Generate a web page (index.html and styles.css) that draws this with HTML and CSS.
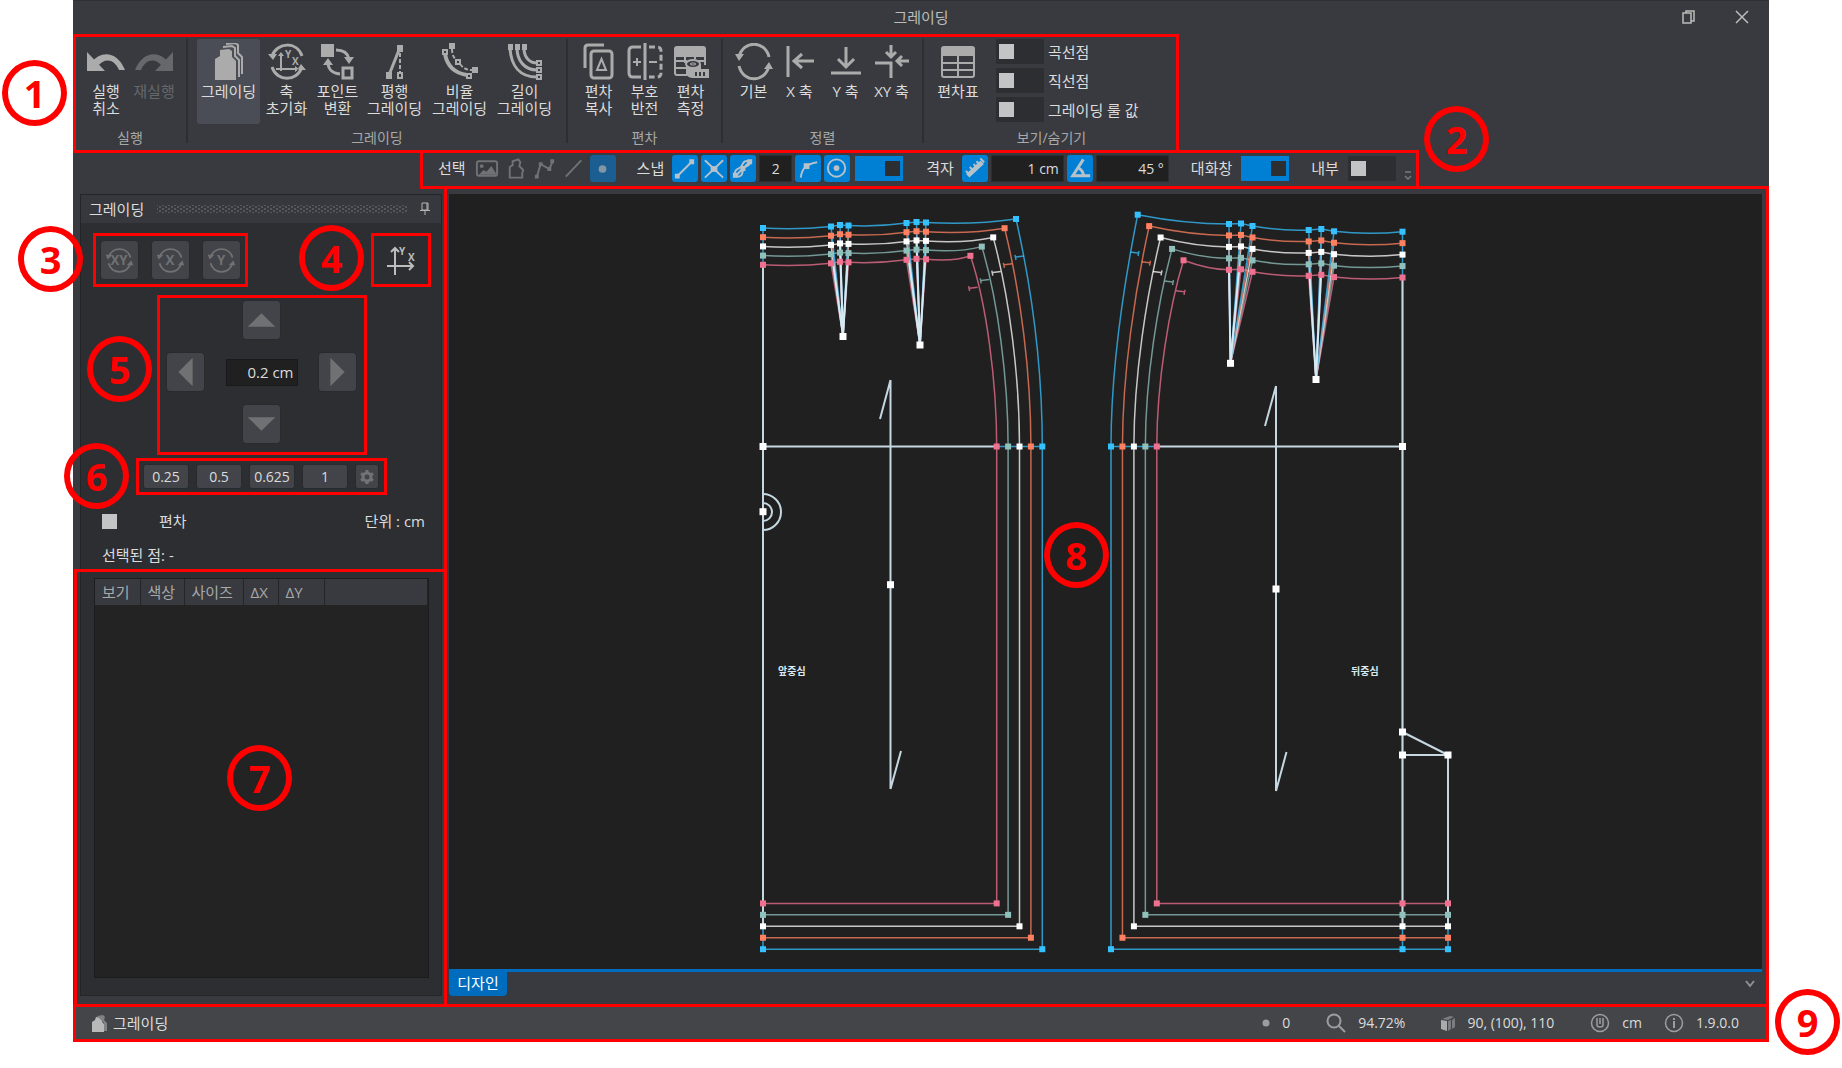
FILE: index.html
```html
<!DOCTYPE html>
<html lang="ko">
<head>
<meta charset="UTF-8">
<meta name="viewport" content="width=device-width, initial-scale=1.0">
<title>그레이딩</title>
<link rel="stylesheet" href="styles.css">
</head>
<body>
<div class="app">

    <header class="titlebar">
        <h1>그레이딩</h1>
        <div class="window-buttons">
            <button type="button" aria-label="이전 크기로"><svg width="14" height="16" viewBox="0 0 14 16"><path d="M1 4h8v10H1zM4 4V2h8v10H9" fill="none" stroke="currentColor" stroke-width="1.5"/></svg></button>
            <button type="button" aria-label="닫기"><svg width="14" height="16" viewBox="0 0 14 16"><path d="M1 2l12 12M13 2L1 14" fill="none" stroke="currentColor" stroke-width="1.5"/></svg></button>
        </div>
    </header>

    <section class="ribbon">
        <div class="group group-run">
            <div class="tools">
                <button type="button" class="tool w48"><svg viewBox="0 0 38 38"><path d="M0 9v19h18z" fill="currentColor"/><path d="M5 19C13 8 30 7 38 27h-6C27 15 17 15 11 23z" fill="currentColor"/></svg><span>실행<br>취소</span></button>
                <button type="button" class="tool w48" disabled><svg viewBox="0 0 38 38"><path d="M38 9v19H20z" fill="currentColor"/><path d="M33 19C25 8 8 7 0 27h6C11 15 21 15 27 23z" fill="currentColor"/></svg><span>재실행</span></button>
            </div>
            <p>실행</p>
        </div>
        <div class="group group-grading">
            <div class="tools">
                <button type="button" class="tool w63 selected"><svg viewBox="0 0 38 38"><path d="M5 37V16l5-3V7l9-1 3 2v6l4 4v19z" fill="currentColor"/><path d="M13 4l9-1 3 2v8l4 4v17M16 1l9-1 3 2v8l4 4v17" fill="none" stroke="currentColor" stroke-width="2"/></svg><span>그레이딩</span></button>
                <button type="button" class="tool w53"><svg viewBox="0 0 38 38"><g fill="none" stroke="currentColor" stroke-width="3"><path d="M4 13C9-1 29-2 34 13M34 24C29 39 9 39 4 24"/><path d="M13 11v17M8 26h20" stroke-width="2"/></g><path d="M0 11h9l-4 6zM38 27h-9l4-6zM10 13h6l-3-4zM27 23v6l4-3z" fill="currentColor"/><text x="17" y="15" class="glyph">Y</text><text x="24" y="22" class="glyph">X</text></svg><span>축<br>초기화</span></button>
                <button type="button" class="tool w49"><svg viewBox="0 0 38 38"><path d="M2 1h13v13H2zM25 14h10l-5 7zM4 22h10L9 15z" fill="currentColor"/><path d="M17 7c9 0 12 4 13 9M9 19c0 8 4 11 12 12M24 25h9v10h-9z" fill="none" stroke="currentColor" stroke-width="3"/></svg><span>포인트<br>변환</span></button>
                <button type="button" class="tool w65"><svg viewBox="0 0 38 38"><path d="M21 2h6v7h-6zM10 29h6v7h-6z" fill="currentColor"/><path d="M23 7L13 32" stroke="currentColor" stroke-width="3"/><path d="M24 10v19" stroke="currentColor" stroke-width="2" stroke-dasharray="4 2"/><path d="M22 30h4v5h-4z" fill="none" stroke="currentColor" stroke-width="2"/></svg><span>평행<br>그레이딩</span></button>
                <button type="button" class="tool w65"><svg viewBox="0 0 38 38"><path d="M8 0h6v6H8zM31 24h6v6h-6z" fill="currentColor"/><g fill="none" stroke="currentColor" stroke-width="2"><path d="M2 7h4v4H2zM26 31h4v4h-4zM15 17h4v4h-4z"/><path d="M11 6c0 6 2 9 5 12M19 21c3 4 6 6 12 6" stroke-width="2" stroke-dasharray="4 2"/><path d="M4 11c2 11 9 19 22 21" stroke-width="4"/></g></svg><span>비율<br>그레이딩</span></button>
                <button type="button" class="tool w65"><svg viewBox="0 0 38 38"><path d="M2 1h5v6H2zM9 1h5v6H9zM16 1h5v6h-5z" fill="currentColor"/><g fill="none" stroke="currentColor"><path d="M4 5c1 18 10 29 27 29M11 5c0 13 8 22 20 22M18 5c0 10 6 15 13 15" stroke-width="3"/><path d="M31 18h4v4h-4zM31 25h4v4h-4zM31 32h4v4h-4z" stroke-width="2"/></g></svg><span>길이<br>그레이딩</span></button>
            </div>
            <p>그레이딩</p>
        </div>
        <div class="group group-delta">
            <div class="tools">
                <button type="button" class="tool w46"><svg viewBox="0 0 38 38"><g fill="none" stroke="currentColor" stroke-width="3"><path d="M5 25V5q0-3 3-3h16"/><rect x="11" y="8" width="21" height="27" rx="3"/><path d="M17 27l4.500-11L26 27z" stroke-width="2"/></g></svg><span>편차<br>복사</span></button>
                <button type="button" class="tool w46"><svg viewBox="0 0 38 38"><g fill="none" stroke="currentColor" stroke-width="3"><path d="M19 0v37M15 4H7Q3 4 3 8v22q0 4 4 4h8"/><path d="M23 4h8q4 0 4 4v22q0 4-4 4h-8" stroke-dasharray="6 3"/><path d="M7 19h8M11 15v8M23 19h8" stroke-width="2"/></g></svg><span>부호<br>반전</span></button>
                <button type="button" class="tool w46"><svg viewBox="0 0 38 38"><path d="M2 6q0-3 3-3h26q3 0 3 3v8H2z" fill="currentColor"/><path d="M3 12v18q0 2 2 2h10M3 18h12M3 25h12M13 12v8M23 12v4M33 12v10M24 18h9" fill="none" stroke="currentColor" stroke-width="2"/><path d="M14 21v10q2 4 7 4h16v-9h-8v-5" fill="currentColor"/><ellipse cx="21" cy="21" rx="7" ry="4" fill="#383a3f" stroke="currentColor" stroke-width="2"/><ellipse cx="21" cy="21" rx="3" ry="1" fill="none" stroke="currentColor"/><path d="M24 33v-4M28 33v-4M32 33v-4" fill="none" stroke="#383a3f" stroke-width="2"/></svg><span>편차<br>측정</span></button>
            </div>
            <p>편차</p>
        </div>
        <div class="group group-align">
            <div class="tools">
                <button type="button" class="tool w46"><svg viewBox="0 0 38 38"><path d="M4 14C8-3 30-3 34 14M34 23C30 40 8 40 4 23" fill="none" stroke="currentColor" stroke-width="3"/><path d="M0 11h9l-5 7zM38 26h-9l5-7z" fill="currentColor"/></svg><span>기본</span></button>
                <button type="button" class="tool w46"><svg viewBox="0 0 38 38"><path d="M7 3v31M33 18H13M21 11l-8 7 8 7" fill="none" stroke="currentColor" stroke-width="3"/></svg><span>X 축</span></button>
                <button type="button" class="tool w46"><svg viewBox="0 0 38 38"><path d="M4 30h30M19 4v20M11 16l8 8 8-8" fill="none" stroke="currentColor" stroke-width="3"/></svg><span>Y 축</span></button>
                <button type="button" class="tool w46"><svg viewBox="0 0 38 38"><path d="M18 2v11M13 9l5 5 5-5M2 20h16v15M36 18H24M29 13l-5 5 5 5" fill="none" stroke="currentColor" stroke-width="3"/></svg><span>XY 축</span></button>
            </div>
            <p>정렬</p>
        </div>
        <div class="group group-view">
            <div class="tools">
                <button type="button" class="tool w54"><svg viewBox="0 0 38 38"><path d="M2 6q0-3 3-3h28q3 0 3 3v7H2z" fill="currentColor"/><path d="M3 12v20q0 2 2 2h28q2 0 2-2V12M3 20h32M3 27h32M19 12v22" fill="none" stroke="currentColor" stroke-width="2"/></svg><span>편차표</span></button>
                <div class="toggles">
                    <label><input type="checkbox" class="toggle">곡선점</label>
                    <label><input type="checkbox" class="toggle">직선점</label>
                    <label><input type="checkbox" class="toggle">그레이딩 룰 값</label>
                </div>
            </div>
            <p>보기/숨기기</p>
        </div>
        <span class="frame"></span>
        <span class="pin pin-1">1</span>
    </section>

    <section class="quickbar">
        <span class="q-label">선택</span>
        <button type="button" class="q-btn flat" aria-label="이미지"><svg viewBox="0 0 27 27"><rect x="3" y="6" width="21" height="15" rx="2" fill="none" stroke="currentColor" stroke-width="2"/><circle cx="8" cy="11" r="2" fill="currentColor"/><path d="M5 20l5-5 3 2 5-6 5 8v1z" fill="currentColor"/></svg></button>
        <button type="button" class="q-btn flat" aria-label="패턴"><svg viewBox="0 0 27 27"><path d="M7 23V12l3-2V6l6-2 2 3-1 4 4 4-1 3v5z" fill="none" stroke="currentColor" stroke-width="2"/></svg></button>
        <button type="button" class="q-btn flat" aria-label="폴리선"><svg viewBox="0 0 27 27"><path d="M5 22L9 9l9 5 4-9" fill="none" stroke="currentColor" stroke-width="2"/><path d="M3 20h4v4H3zM7 7h4v4H7zM16 12h4v4h-4zM19 4h4v4h-4z" fill="currentColor"/></svg></button>
        <button type="button" class="q-btn flat" aria-label="선"><svg viewBox="0 0 27 27"><path d="M5 22L21 5" stroke="currentColor" stroke-width="2"/></svg></button>
        <button type="button" class="q-btn dim" aria-label="점"><svg viewBox="0 0 27 27"><circle cx="13" cy="14" r="4" fill="currentColor"/></svg></button>

        <span class="q-label snap">스냅</span>
        <button type="button" class="q-btn" aria-label="끝점"><svg viewBox="0 0 27 27"><path d="M6 21L21 6" stroke="currentColor" stroke-width="2"/><path d="M3 19h5v5H3zM18 4h5v5h-5z" fill="currentColor"/></svg></button>
        <button type="button" class="q-btn" aria-label="교차점"><svg viewBox="0 0 27 27"><path d="M4 5l19 18M23 5L4 23" stroke="currentColor" stroke-width="2"/><path d="M10 11h7v6h-7z" fill="currentColor"/></svg></button>
        <button type="button" class="q-btn" aria-label="분할점"><svg viewBox="0 0 27 27"><path d="M6 21L21 6M5 19c0-7 5-4 7-8s2-6 9-5M7 22c7 0 5-4 7-8s7-2 7-8" fill="none" stroke="currentColor" stroke-width="2"/><path d="M3 18h5v5H3zM18 4h5v5h-5zM11 11h5v5h-5z" fill="currentColor"/></svg></button>
        <input type="text" class="q-input tiny" value="2" aria-label="분할 수">
        <button type="button" class="q-btn" aria-label="접점"><svg viewBox="0 0 27 27"><path d="M6 23c1-9 5-14 17-16" fill="none" stroke="currentColor" stroke-width="2"/><path d="M9 8h6v6H9z" fill="currentColor"/></svg></button>
        <button type="button" class="q-btn" aria-label="중심점"><svg viewBox="0 0 27 27"><circle cx="13" cy="13" r="9" fill="none" stroke="currentColor" stroke-width="2"/><circle cx="13" cy="13" r="3" fill="currentColor"/></svg></button>
        <input type="checkbox" class="toggle wide-gap" checked aria-label="스냅">

        <span class="q-label grid">격자</span>
        <button type="button" class="q-btn" aria-label="격자 간격"><svg viewBox="0 0 27 27"><path d="M6 21L21 7" stroke="currentColor" stroke-width="5"/><path d="M4 16l4 4M8 12l4 4M12 9l4 4M15 6l4 4M19 3l4 4" stroke="currentColor" stroke-width="2"/></svg></button>
        <input type="text" class="q-input" value="1 cm" aria-label="격자 간격 값">
        <button type="button" class="q-btn" aria-label="각도"><svg viewBox="0 0 27 27"><path d="M17 4L6 21h18M12 13q5 3 5 8" fill="none" stroke="currentColor" stroke-width="3"/></svg></button>
        <input type="text" class="q-input" value="45 °" aria-label="각도 값">

        <label class="q-label dialog">대화창 <input type="checkbox" class="toggle" checked></label>
        <label class="q-label inner">내부 <input type="checkbox" class="toggle"></label>
        <button type="button" class="q-more" aria-label="더 보기"><svg width="8" height="10" viewBox="0 0 8 10"><path d="M1 1h6M1 5l3 3 3-3" fill="none" stroke="currentColor" stroke-width="1.500"/></svg></button>
        <span class="frame"></span>
        <span class="pin pin-2">2</span>
    </section>

    <main class="main">
        <aside class="side">
            <div class="panel">
                <div class="panel-head">
                    <h2>그레이딩</h2>
                    <span class="grip"></span>
                    <button type="button" aria-label="고정"><svg width="10" height="14" viewBox="0 0 10 14"><path d="M2 1h6v7H2zM0 8.500h10M5 9v4M7 1v7" fill="none" stroke="currentColor" stroke-width="1"/></svg></button>
                </div>
                <div class="panel-body">
                    <div class="row-axis">
                        <div class="boxed rotate">
                            <button type="button" class="key" disabled aria-label="XY 회전"><svg viewBox="0 0 39 39"><use href="#spin"/><text x="19" y="25" class="axis">XY</text></svg></button>
                            <button type="button" class="key" disabled aria-label="X 회전"><svg viewBox="0 0 39 39"><use href="#spin"/><text x="19" y="25" class="axis">X</text></svg></button>
                            <button type="button" class="key" disabled aria-label="Y 회전"><svg viewBox="0 0 39 39"><use href="#spin"/><text x="19" y="25" class="axis">Y</text></svg></button>
                        </div>
                        <button type="button" class="boxed origin" aria-label="축 설정"><svg width="34" height="34" viewBox="0 0 34 34"><path d="M11 6v26M3 23h26M7 9l4-4 4 4M25 19l4 4-4 4" fill="none" stroke="currentColor" stroke-width="2"/><text x="15" y="12" class="glyph">Y</text><text x="24" y="18" class="glyph">X</text></svg></button>
                    </div>

                    <div class="boxed pad">
                        <button type="button" class="key up" disabled aria-label="위"><svg viewBox="0 0 39 40"><path d="M5 27l14.500-14L34 27z" fill="currentColor"/></svg></button>
                        <button type="button" class="key left" disabled aria-label="왼쪽"><svg viewBox="0 0 39 40"><path d="M27 5v30L12 20z" fill="currentColor"/></svg></button>
                        <input type="text" class="step" value="0.2 cm" aria-label="이동량">
                        <button type="button" class="key right" disabled aria-label="오른쪽"><svg viewBox="0 0 39 40"><path d="M12 5v30l15-15z" fill="currentColor"/></svg></button>
                        <button type="button" class="key down" disabled aria-label="아래"><svg viewBox="0 0 39 40"><path d="M5 13l14.500 14L34 13z" fill="currentColor"/></svg></button>
                    </div>

                    <div class="boxed presets">
                        <button type="button">0.25</button>
                        <button type="button">0.5</button>
                        <button type="button">0.625</button>
                        <button type="button">1</button>
                        <button type="button" class="gear" disabled aria-label="설정"><svg width="16" height="16" viewBox="0 0 16 16"><circle cx="8" cy="8" r="4" fill="none" stroke="currentColor" stroke-width="3"/><path d="M8 1v3M8 12v3M2 4.500l2.500 1.500M11.500 10l2.500 1.500M2 11.500L4.500 10M11.500 6L14 4.500" stroke="currentColor" stroke-width="3"/></svg></button>
                    </div>

                    <div class="row-delta">
                        <label><input type="checkbox">편차</label>
                        <span>단위 : cm</span>
                    </div>
                    <p class="picked">선택된 점: -</p>

                    <div class="sizes">
                        <table>
                            <thead>
                                <tr><th class="c1">보기</th><th class="c2">색상</th><th class="c3">사이즈</th><th class="c4">ΔX</th><th class="c5">ΔY</th><th></th></tr>
                            </thead>
                        </table>
                    </div>
                </div>
            </div>
            <span class="frame"></span>
            <span class="pin pin-3">3</span>
            <span class="pin pin-4">4</span>
            <span class="pin pin-5">5</span>
            <span class="pin pin-6">6</span>
            <span class="pin pin-7">7</span>
        </aside>

        <section class="workspace">
            <div class="canvas">
                <svg viewBox="449 194 1313 775" role="img" aria-label="패턴">
                    <g id="graded"></g>
                    <g class="base">
                        <path d="M763 265V926M763 446.500H997M890.500 380V789M890.500 380L880 419M890.500 789L901 751"/>
                        <path d="M763 494a18 18 0 0 1 0 36M763 503a9 9 0 0 1 0 18"/>
                        <path d="M1402.500 277V926M1157 446.500h245.500M1276 386v405M1276 386l-11 40M1276 791l10.500-39"/>
                        <path d="M1402.500 732L1448 755H1402.500M1448 755v171"/>
                    </g>
                    <g id="knots"></g>
                    <text x="778" y="675" class="note">앞중심</text>
                    <text x="1351" y="675" class="note">뒤중심</text>
                </svg>
            </div>
            <div class="tabs">
                <button type="button" class="tab">디자인</button>
                <button type="button" class="tabs-more" aria-label="탭 목록"><svg width="10" height="8" viewBox="0 0 10 8"><path d="M1 1l4 5 4-5" fill="none" stroke="currentColor" stroke-width="2"/></svg></button>
            </div>
            <span class="frame"></span>
            <span class="pin pin-8">8</span>
        </section>
    </main>

    <footer class="statusbar">
        <svg class="mode-icon" width="16" height="19" viewBox="0 0 16 19"><path d="M0 18V8l3-2 1-3 6 1v4l2 2v8z" fill="currentColor"/><path d="M5 2l6-1 2 2-1 3 3 3v8h-3V9" fill="#818285"/></svg>
        <span class="mode">그레이딩</span>
        <span class="stat s-count"><svg width="8" height="20" viewBox="0 0 8 20"><circle cx="4" cy="10" r="3.500" fill="currentColor"/></svg>0</span>
        <span class="stat s-zoom"><svg width="20" height="20" viewBox="0 0 20 20"><circle cx="8" cy="8" r="6.500" fill="none" stroke="currentColor" stroke-width="2"/><path d="M13 13l6 6" stroke="currentColor" stroke-width="2"/></svg>94.72%</span>
        <span class="stat s-size"><svg width="14" height="16" viewBox="0 0 14 16"><path d="M0 5l6 1v10l-6-2z" fill="#ababab"/><path d="M7 6l3-1v9l-3 2zM11 5l3-2v9l-3 2zM1 4l8-3 4 1-6 3z" fill="#7b7c7f"/></svg>90, (100), 110</span>
        <span class="stat s-unit"><svg width="20" height="20" viewBox="0 0 20 20"><circle cx="10" cy="10" r="8.500" fill="none" stroke="currentColor" stroke-width="1.500"/><path d="M7 5v7q0 2 3 2t3-2V5M10 5v6" fill="none" stroke="currentColor" stroke-width="1.500"/></svg>cm</span>
        <span class="stat s-ver"><svg width="20" height="20" viewBox="0 0 20 20"><circle cx="10" cy="10" r="8.500" fill="none" stroke="currentColor" stroke-width="1.500"/><path d="M10 8v7M10 5v2" stroke="currentColor" stroke-width="2"/></svg>1.9.0.0</span>
        <span class="frame"></span>
        <span class="pin pin-9">9</span>
    </footer>
</div>

<svg class="defs" width="0" height="0" aria-hidden="true">
    <symbol id="spin" viewBox="0 0 39 39">
        <path d="M8 17C11 5 28 5 31 17M31 23C28 35 11 35 8 23" fill="none" stroke="currentColor" stroke-width="2"/>
        <path d="M5 14h7l-5 5zM34 25h-7l5-5z" fill="currentColor"/>
    </symbol>
</svg>
<script src="pattern.js"></script>
</body>
</html>
```

FILE: styles.css
```css
* {
    box-sizing: border-box;
}
body {
    margin: 0;
    min-height: 100vh;
    background-color: #fff;
    color: #dcdcdc;
    font-family: "Open Sans", "Noto Sans CJK KR", sans-serif;
    font-size: 15px;
    line-height: 22px;
}
h1, h2, p {
    margin: 0;
    font-size: 15px;
    font-weight: normal;
}
button, input {
    font: inherit;
    color: inherit;
    margin: 0;
    padding: 0;
    border: 0;
    background: none;
}
svg {
    display: block;
}
.defs {
    position: absolute;
}
.app {
    display: flex;
    flex-direction: column;
    min-height: calc(100vh - 26px);
    margin: 0 73px;
    background-color: #383a3f;
}

/* red guide marks */
.frame {
    position: absolute;
    inset: 0;
    border: 3px solid #f00;
    pointer-events: none;
}
.pin {
    position: absolute;
    z-index: 2;
    width: 65px;
    height: 66px;
    border: 6px solid #f00;
    border-radius: 50%;
    color: #f00;
    font-size: 38px;
    font-weight: bold;
    line-height: 54px;
    text-align: center;
}
.pin-1 { left: -71px; top: 26px; }
.pin-2 { left: 1004px; top: -44px; }
.pin-3 { left: -55px; top: 37px; }
.pin-4 { left: 226px; top: 36px; }
.pin-5 { left: 14px; top: 147px; }
.pin-6 { left: -9px; top: 254px; }
.pin-7 { left: 154px; top: 556px; }
.pin-8 { left: calc(50% - 63px); top: 333px; }
.pin-9 { right: -71px; top: -15px; }
.boxed {
    border: 3px solid #f00;
}

/* title bar */
.titlebar {
    position: relative;
    height: 34px;
    border-top: 1px solid #2e3034;
    text-align: center;
    color: #bcbcbc;
}
.titlebar h1 {
    line-height: 32px;
}
.window-buttons {
    position: absolute;
    right: 20px;
    top: 8px;
    display: flex;
    gap: 39px;
}

/* ribbon */
.ribbon {
    position: relative;
    display: flex;
    align-self: flex-start;
    height: 119px;
    padding: 5px 0 0 1px;
}
.group {
    height: 104px;
    border-right: 2px solid #2c2e31;
}
.group-run { width: 114px; }
.group-grading { width: 380px; }
.group-delta { width: 155px; }
.group-align { width: 201px; }
.group-view { width: 255px; border: 0; }
.group p {
    margin-top: 5px;
    text-align: center;
    font-size: 14px;
    line-height: 18px;
    color: #a9a9a9;
}
.tools {
    display: flex;
    justify-content: center;
    height: 85px;
}
.group-view .tools {
    justify-content: flex-start;
    padding-left: 7px;
}
.tool {
    display: flex;
    flex-direction: column;
    align-items: center;
    height: 85px;
    padding-top: 4px;
    line-height: 17px;
    white-space: nowrap;
}
.tool svg {
    width: 38px;
    height: 38px;
    margin-bottom: 2px;
    color: #ababab;
}
.tool:disabled, .tool:disabled svg {
    color: #66686b;
}
.w46 { width: 46px; }
.w48 { width: 48px; }
.w49 { width: 49px; }
.w53 { width: 53px; }
.w54 { width: 54px; }
.w63 { width: 63px; }
.w65 { width: 65px; }
.selected {
    background-color: #4a4d55;
    border-radius: 3px;
}
.glyph {
    font-size: 10px;
    font-weight: bold;
    fill: currentColor;
}
.toggles {
    display: flex;
    flex-direction: column;
    gap: 4px;
    margin-left: 11px;
}
.toggles label {
    display: flex;
    align-items: center;
    gap: 4px;
    height: 25px;
}
.toggle {
    appearance: none;
    flex: none;
    display: flex;
    align-items: center;
    width: 48px;
    height: 25px;
    padding: 0 3px;
    background-color: #2d2e32;
}
.toggle::before {
    content: "";
    width: 15px;
    height: 15px;
    background-color: #c3c4c6;
}
.toggle:checked {
    justify-content: flex-end;
    background-color: #0080d5;
}
.toggle:checked::before {
    background-color: #2d2e32;
}

/* second toolbar */
.quickbar {
    position: relative;
    display: flex;
    align-items: center;
    gap: 3px;
    width: 999px;
    height: 39px;
    margin: -3px 0 0 347px;
    padding: 0 8px 3px 18px;
    white-space: nowrap;
}
.q-label {
    display: flex;
    align-items: center;
    gap: 9px;
    margin-right: 5px;
}
.q-label.snap { margin-left: 18px; }
.q-label.grid { margin-left: 20px; }
.q-label.dialog { margin-left: 19px; }
.q-label.inner { margin-left: 14px; }
.q-btn {
    flex: none;
    width: 26px;
    height: 27px;
    border-radius: 3px;
    background-color: #0080d5;
    color: #b7c1c9;
}
.q-btn.flat {
    background: none;
    color: #707275;
}
.q-btn.dim {
    background-color: #1b5f92;
    color: #8496a5;
}
.q-btn svg {
    width: 26px;
    height: 27px;
}
.q-input {
    width: 73px;
    height: 27px;
    padding-right: 4px;
    border: 1px solid #2c2d30;
    background-color: #202021;
    text-align: right;
    font-size: 14px;
}
.q-input.tiny {
    width: 33px;
    padding: 0;
    text-align: center;
}
.wide-gap {
    margin-left: 2px;
}
.q-more {
    align-self: flex-end;
    margin-bottom: 5px;
    color: #77797c;
}

/* side panel */
.main {
    flex: 1;
    display: flex;
}
.side {
    position: relative;
    flex: none;
    display: flex;
    width: 371px;
    padding: 5px 2px 8px 7px;
}
.side > .frame {
    inset: 380px -3px -3px 1px;
}
.panel {
    flex: 1;
    display: flex;
    flex-direction: column;
    border: 1px solid #242528;
    background-color: #2d2e32;
}
.panel-head {
    display: flex;
    align-items: center;
    gap: 13px;
    height: 28px;
    padding: 0 11px 0 8px;
    background-color: #36383d;
}
.panel-head button {
    color: #b5b5b5;
}
.grip {
    flex: 1;
    height: 8px;
    background-image: radial-gradient(circle, #55575b 1px, transparent 1px), radial-gradient(circle, #55575b 1px, transparent 1px);
    background-size: 6px 4px;
    background-position: 0 0, 3px 2px;
}
.panel-body {
    flex: 1;
    display: flex;
    flex-direction: column;
    padding: 10px 10px 17px 12px;
}
.row-axis {
    display: flex;
    justify-content: space-between;
}
.rotate {
    display: flex;
    align-items: center;
    gap: 12px;
    height: 54px;
    padding: 0 4px;
}
.origin {
    display: flex;
    align-items: center;
    justify-content: center;
    width: 60px;
    height: 54px;
    color: #bdbdbd;
}
.key {
    width: 39px;
    height: 40px;
    border: 1px solid #292a2d;
    border-radius: 4px;
    background-color: #42444a;
    color: #707172;
}
.key svg {
    width: 37px;
    height: 38px;
}
.axis {
    font-size: 14px;
    font-weight: bold;
    text-anchor: middle;
    fill: currentColor;
}
.pad {
    display: grid;
    grid-template: repeat(3, 40px) / repeat(3, 39px);
    grid-template-areas: ". up ." "left step right" ". down .";
    gap: 12px 37px;
    place-items: center;
    width: 210px;
    height: 160px;
    margin: 8px 0 0 64px;
    padding: 2px 6px;
}
.up { grid-area: up; }
.left { grid-area: left; }
.right { grid-area: right; }
.down { grid-area: down; }
.step {
    grid-area: step;
    width: 72px;
    height: 27px;
    padding-right: 3px;
    border: 1px solid #18191a;
    background-color: #202021;
    text-align: right;
}
.presets {
    display: flex;
    align-items: center;
    gap: 7px;
    width: 251px;
    height: 37px;
    margin: 3px 0 0 43px;
    padding: 0 4px;
}
.presets button {
    width: 46px;
    height: 25px;
    border: 1px solid #292a2d;
    border-radius: 3px;
    background-color: #42444a;
    font-size: 14px;
}
.presets .gear {
    display: flex;
    align-items: center;
    justify-content: center;
    width: 24px;
    color: #727374;
}
.row-delta {
    display: flex;
    justify-content: space-between;
    margin-top: 15px;
    padding: 0 6px 0 9px;
}
.row-delta label {
    display: flex;
    align-items: center;
    gap: 42px;
}
.row-delta input {
    appearance: none;
    width: 15px;
    height: 15px;
    background-color: #c3c4c6;
}
.picked {
    margin-top: 12px;
    padding-left: 9px;
}
.sizes {
    flex: 1;
    margin: 12px 2px 0 1px;
    border: 1px solid #1b1c1d;
    background-color: #232324;
}
.sizes table {
    width: 100%;
    table-layout: fixed;
    border-collapse: collapse;
}
.sizes th {
    height: 26px;
    padding: 0 0 0 7px;
    border-right: 1px solid #242528;
    background-color: #383a3f;
    color: #a9a9a9;
    font-weight: normal;
    text-align: left;
}
.c1 { width: 45px; }
.c2 { width: 44px; }
.c3 { width: 59px; }
.c4 { width: 35px; }
.c5 { width: 46px; }

/* drawing area */
.workspace {
    position: relative;
    flex: 1;
    display: flex;
    flex-direction: column;
    padding: 5px 7px 8px 5px;
}
.workspace > .frame {
    inset: -3px 0;
}
.canvas {
    flex: 1;
    display: flex;
    background-color: #202020;
}
.canvas svg {
    flex: 1;
    width: 100%;
}
.tabs {
    display: flex;
    justify-content: space-between;
    height: 27px;
    border-top: 3px solid #006cbe;
}
.tab {
    width: 58px;
    height: 24px;
    padding-bottom: 3px;
    border-radius: 0 0 4px 4px;
    background-color: #006cbe;
    color: #fff;
    line-height: 20px;
}
.tabs-more {
    margin-right: 7px;
    color: #909193;
}
.base path {
    fill: none;
    stroke: #c5d8e2;
    stroke-width: 2;
}
.line {
    fill: none;
    stroke-width: 1.5;
    opacity: 0.75;
}
.dart {
    fill: none;
    stroke-width: 2;
}
.note {
    font-size: 10px;
    font-weight: bold;
    fill: #d9ecf5;
}

/* status bar */
.statusbar {
    position: relative;
    display: flex;
    align-items: center;
    height: 38px;
    padding: 0 30px 0 19px;
    background-color: #434549;
}
.mode-icon {
    color: #b9b9b9;
}
.mode {
    margin: 0 auto 0 5px;
}
.stat {
    display: flex;
    align-items: center;
    gap: 12px;
    margin-left: 22px;
    font-size: 14px;
}
.stat svg {
    color: #9c9da0;
}
.s-zoom, .s-size, .s-unit {
    margin-left: 36px;
}
```

FILE: pattern.js
```js
// sizes from the smallest to the largest
var colors = ['#f07090', '#8fc0bc', '#ffffff', '#ff8060', '#35c0ff'];
var lines = '', knots = '';

function path(d, color, cls) {
    lines += '<path class="' + cls + '" stroke="' + color + '" d="' + d + '"/>';
}

function knot(x, y, color, size) {
    size = size || 6;
    knots += '<rect x="' + (x - size / 2) + '" y="' + (y - size / 2) + '" width="' + size + '" height="' + size + '" fill="' + color + '"/>';
}

function front(i) {
    var c = colors[i], k = 4 - i;
    var dy = k * 9.2, x = 1042.3 - k * 11.4, bottom = 949.2 - k * 11.45;
    var top = [[763, 228], [831, 226.5], [840, 225], [848.5, 225.5], [906.5, 223], [916.5, 222], [926, 222.5], [1016 - k * 11.4, 219]];
    var p = top.map(function (t) { return [t[0], t[1] + dy]; });

    path('M' + p[0] + 'Q797 ' + (230 + dy) + ' ' + p[1] + 'L' + p[2] + 'L' + p[3] +
        'Q877 ' + (227 + dy) + ' ' + p[4] + 'L' + p[5] + 'L' + p[6] +
        'Q' + (975 - k * 5) + ' ' + (225 + dy) + ' ' + p[7] +
        'C' + (p[7][0] + 16) + ' ' + (p[7][1] + 71 - k * 6) + ' ' + x + ' ' + (370 + k * 3) + ' ' + x + ' 446.5' +
        'V' + bottom + 'H763', c, 'line');
    var nx = 1024 - k * 11.6, ny = 256 + k * 7.8;
    path('M' + nx + ' ' + ny + 'l-8 1m-1 -2l1 5', c, 'line');
    [1, 2, 3].forEach(function (n) { path('M' + p[n] + 'L843 336.5', c, 'line'); });
    [4, 5, 6].forEach(function (n) { path('M' + p[n] + 'L920 345', c, 'line'); });
    p.forEach(function (t) { knot(t[0], t[1], c); });
    knot(x, 446.5, c);
    knot(x, bottom, c);
    knot(763, bottom, c);
}

function back(i) {
    var c = colors[i], k = 4 - i;
    var d = k * 11.45, x = 1111 + d, bottom = 949.2 - d;
    var top = [[1137.7 + d, 214.7], [1229, 224], [1241, 223.5], [1252.5, 226], [1308.7, 230], [1321.3, 229], [1334, 231.3], [1402.5, 231.7]];
    var p = top.map(function (t) { return [t[0], t[1] + d]; });
    p[0][1] = 214.7 + k * 11.4;

    path('M' + x + ' 446.5C' + x + ' ' + (370 + k * 3) + ' ' + (p[0][0] - 14) + ' ' + (p[0][1] + 70 - k * 6) + ' ' + p[0] +
        'Q' + (1185 + k * 6) + ' ' + (224 + d) + ' ' + p[1] + 'L' + p[2] + 'L' + p[3] +
        'Q1280 ' + (231 + d) + ' ' + p[4] + 'L' + p[5] + 'L' + p[6] +
        'Q1368 ' + (235 + d) + ' ' + p[7], c, 'line');
    path('M' + x + ' 446.5V' + bottom + 'H1448', c, 'line');
    path('M' + (1130 + k * 11.5) + ' ' + (252 + k * 9.7) + 'l8 1m1 -2l-1 5', c, 'line');
    [1, 2, 3].forEach(function (n) { path('M' + p[n] + 'L1230.500 363', c, 'line'); });
    [4, 5, 6].forEach(function (n) { path('M' + p[n] + 'L1316 379.500', c, 'line'); });
    p.forEach(function (t) { knot(t[0], t[1], c); });
    knot(x, 446.5, c);
    knot(x, bottom, c);
    knot(1402.5, bottom, c);
    knot(1448, bottom, c);
}

for (var i = 0; i < colors.length; i++) {
    front(i);
    back(i);
}

// largest size runs along the shared edges
path('M763 228V949M1402.5 231V949M1448 926V949M997 446.5H1042M1111 446.5H1157', colors[4], 'line');

// darts of the base size
path('M833 262L843 336L847.500 262M840 244L843 336M909 260L920 345L925 260M916.500 241L920 345', '#d5e9f3', 'dart');
path('M1229 270L1230.500 363L1239 270M1309.500 275L1316 379L1321 275', '#d5e9f3', 'dart');

[[843, 336.5], [920, 345], [763, 446.5], [763, 511.7], [890.5, 584.7],
 [1230.5, 363.3], [1316, 379.5], [1402.5, 446.5], [1276, 589],
 [1402.5, 732], [1402.5, 755], [1448, 755]].forEach(function (t) {
    knot(t[0], t[1], '#fff', 7);
});

document.getElementById('graded').innerHTML = lines;
document.getElementById('knots').innerHTML = knots;
```
